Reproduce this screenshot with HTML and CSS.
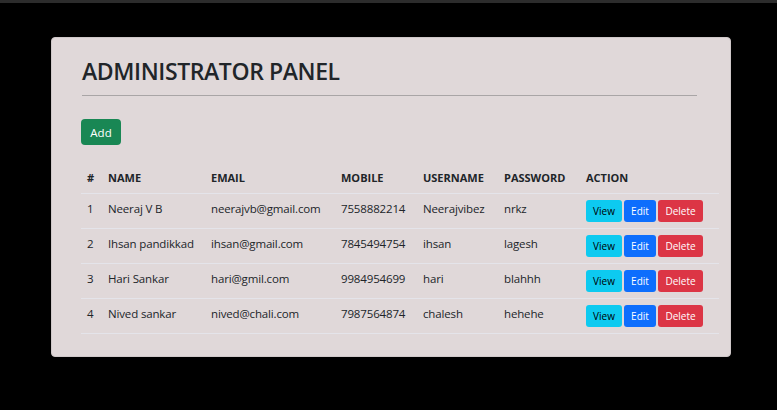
FILE: index.html
```html
<!DOCTYPE html>
<html>
<head>
<meta charset="utf-8">
<link rel="stylesheet" href="styles.css">
</head>
<body>
<div class="topbar"></div>
<main class="card">
  <h1 class="title">ADMINISTRATOR PANEL</h1>
  <hr class="rule">
  <button class="btn btn-add">Add</button>
  <table class="users">
    <colgroup>
      <col style="width:21px"><col style="width:103px"><col style="width:130px"><col style="width:82px"><col style="width:81px"><col style="width:82px"><col style="width:139px">
    </colgroup>
    <thead>
      <tr><th>#</th><th>NAME</th><th>EMAIL</th><th>MOBILE</th><th>USERNAME</th><th>PASSWORD</th><th>ACTION</th></tr>
    </thead>
    <tbody>
      <tr><td>1</td><td>Neeraj V B</td><td>neerajvb@gmail.com</td><td>7558882214</td><td>Neerajvibez</td><td>nrkz</td>
        <td><div class="actions"><button class="btn sm view">View</button><button class="btn sm edit">Edit</button><button class="btn sm del">Delete</button></div></td></tr>
      <tr><td>2</td><td>Ihsan pandikkad</td><td>ihsan@gmail.com</td><td>7845494754</td><td>ihsan</td><td>lagesh</td>
        <td><div class="actions"><button class="btn sm view">View</button><button class="btn sm edit">Edit</button><button class="btn sm del">Delete</button></div></td></tr>
      <tr><td>3</td><td>Hari Sankar</td><td>hari@gmil.com</td><td>9984954699</td><td>hari</td><td>blahhh</td>
        <td><div class="actions"><button class="btn sm view">View</button><button class="btn sm edit">Edit</button><button class="btn sm del">Delete</button></div></td></tr>
      <tr><td>4</td><td>Nived sankar</td><td>nived@chali.com</td><td>7987564874</td><td>chalesh</td><td>hehehe</td>
        <td><div class="actions"><button class="btn sm view">View</button><button class="btn sm edit">Edit</button><button class="btn sm del">Delete</button></div></td></tr>
    </tbody>
  </table>
</main>
</body>
</html>
```
FILE: styles.css
```css
* { box-sizing: border-box; }
html, body { margin: 0; padding: 0; }
body {
  background: #000;
  font-family: "Open Sans", "Noto Sans", sans-serif;
  color: #212529;
  height: 410px;
  overflow: hidden;
}
.topbar {
  height: 3px;
  background: #2c2c2c;
}
.card {
  margin: 34px 0 0 51px;
  width: 680px;
  height: 320px;
  background: #e0d8d9;
  border: 1px solid #cfc8c9;
  border-radius: 4px;
  padding: 0 0 0 29px;
}
.title {
  margin: 18px 0 0 1px;
  font-size: 23px;
  font-weight: 600;
  line-height: 30px;
  letter-spacing: -0.4px;
}
.rule {
  margin: 9px 0 0 1px;
  width: 615px;
  border: 0;
  border-top: 1px solid #a9a5a6;
  height: 0;
}
.btn {
  font-family: inherit;
  border: 0;
  cursor: pointer;
  padding: 0;
  display: inline-flex;
  align-items: center;
  justify-content: center;
}
.btn-add {
  margin-top: 23px;
  width: 40px;
  height: 26px;
  border-radius: 4px;
  background: #198754;
  color: #fff;
  font-size: 11.5px;
}
.users {
  margin-top: 18px;
  border-collapse: collapse;
  table-layout: fixed;
  width: 638px;
  font-size: 11.5px;
  letter-spacing: -0.15px;
}
.users th, .users td {
  text-align: left;
  vertical-align: top;
  padding: 6px 6px;
  line-height: 18px;
  border-bottom: 1px solid #e4e4ea;
  white-space: nowrap;
}
.users th {
  font-weight: 700;
  font-size: 11px;
  letter-spacing: 0;
}
.actions {
  display: flex;
  gap: 2px;
}
.btn.sm {
  height: 22px;
  border-radius: 3px;
  font-size: 10px;
  letter-spacing: 0;
}
.view { width: 36px; background: #0dcaf0; color: #000; }
.edit { width: 32px; background: #0d6efd; color: #fff; }
.del { width: 45px; background: #dc3545; color: #fff; }
```
